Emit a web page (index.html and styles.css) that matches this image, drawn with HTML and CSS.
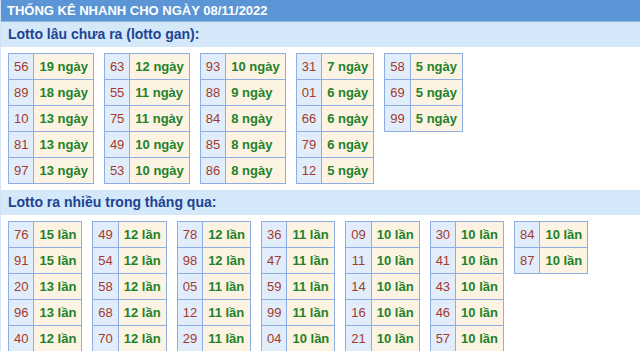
FILE: index.html
```html
<!DOCTYPE html>
<html>
<head>
<meta charset="utf-8">
<link rel="stylesheet" href="styles.css">
</head>
<body>
<div class="box">
  <div class="title">THỐNG KÊ NHANH CHO NGÀY 08/11/2022</div>
  <div class="band">Lotto lâu chưa ra (lotto gan):</div>
  <div class="grid">
    <table class="t"><tr><td class="n">56</td><td class="v">19 ngày</td></tr><tr><td class="n">89</td><td class="v">18 ngày</td></tr><tr><td class="n">10</td><td class="v">13 ngày</td></tr><tr><td class="n">81</td><td class="v">13 ngày</td></tr><tr><td class="n">97</td><td class="v">13 ngày</td></tr></table>
    <table class="t"><tr><td class="n">63</td><td class="v">12 ngày</td></tr><tr><td class="n">55</td><td class="v">11 ngày</td></tr><tr><td class="n">75</td><td class="v">11 ngày</td></tr><tr><td class="n">49</td><td class="v">10 ngày</td></tr><tr><td class="n">53</td><td class="v">10 ngày</td></tr></table>
    <table class="t"><tr><td class="n">93</td><td class="v">10 ngày</td></tr><tr><td class="n">88</td><td class="v">9 ngày</td></tr><tr><td class="n">84</td><td class="v">8 ngày</td></tr><tr><td class="n">85</td><td class="v">8 ngày</td></tr><tr><td class="n">86</td><td class="v">8 ngày</td></tr></table>
    <table class="t"><tr><td class="n">31</td><td class="v">7 ngày</td></tr><tr><td class="n">01</td><td class="v">6 ngày</td></tr><tr><td class="n">66</td><td class="v">6 ngày</td></tr><tr><td class="n">79</td><td class="v">6 ngày</td></tr><tr><td class="n">12</td><td class="v">5 ngày</td></tr></table>
    <table class="t"><tr><td class="n">58</td><td class="v">5 ngày</td></tr><tr><td class="n">69</td><td class="v">5 ngày</td></tr><tr><td class="n">99</td><td class="v">5 ngày</td></tr></table>
  </div>
  <div class="band">Lotto ra nhiều trong tháng qua:</div>
  <div class="grid">
    <table class="t"><tr><td class="n">76</td><td class="v">15 lần</td></tr><tr><td class="n">91</td><td class="v">15 lần</td></tr><tr><td class="n">20</td><td class="v">13 lần</td></tr><tr><td class="n">96</td><td class="v">13 lần</td></tr><tr><td class="n">40</td><td class="v">12 lần</td></tr></table>
    <table class="t"><tr><td class="n">49</td><td class="v">12 lần</td></tr><tr><td class="n">54</td><td class="v">12 lần</td></tr><tr><td class="n">58</td><td class="v">12 lần</td></tr><tr><td class="n">68</td><td class="v">12 lần</td></tr><tr><td class="n">70</td><td class="v">12 lần</td></tr></table>
    <table class="t"><tr><td class="n">78</td><td class="v">12 lần</td></tr><tr><td class="n">98</td><td class="v">12 lần</td></tr><tr><td class="n">05</td><td class="v">11 lần</td></tr><tr><td class="n">12</td><td class="v">11 lần</td></tr><tr><td class="n">29</td><td class="v">11 lần</td></tr></table>
    <table class="t"><tr><td class="n">36</td><td class="v">11 lần</td></tr><tr><td class="n">47</td><td class="v">11 lần</td></tr><tr><td class="n">59</td><td class="v">11 lần</td></tr><tr><td class="n">99</td><td class="v">11 lần</td></tr><tr><td class="n">04</td><td class="v">10 lần</td></tr></table>
    <table class="t"><tr><td class="n">09</td><td class="v">10 lần</td></tr><tr><td class="n">11</td><td class="v">10 lần</td></tr><tr><td class="n">14</td><td class="v">10 lần</td></tr><tr><td class="n">16</td><td class="v">10 lần</td></tr><tr><td class="n">21</td><td class="v">10 lần</td></tr></table>
    <table class="t"><tr><td class="n">30</td><td class="v">10 lần</td></tr><tr><td class="n">41</td><td class="v">10 lần</td></tr><tr><td class="n">43</td><td class="v">10 lần</td></tr><tr><td class="n">46</td><td class="v">10 lần</td></tr><tr><td class="n">57</td><td class="v">10 lần</td></tr></table>
    <table class="t"><tr><td class="n">84</td><td class="v">10 lần</td></tr><tr><td class="n">87</td><td class="v">10 lần</td></tr></table>
  </div>
</div>
</body>
</html>
```
FILE: styles.css
```css
html, body {
  margin: 0;
  padding: 0;
  background: #ffffff;
  font-family: "Liberation Sans", Arial, sans-serif;
}
.box {
  width: 640px;
  border-left: 1px solid #d3e3f5;
  box-sizing: border-box;
}
.title {
  height: 22px;
  line-height: 22px;
  background: #5b95d5;
  color: #ffffff;
  font-weight: bold;
  font-size: 13px;
  padding-left: 6px;
  border-bottom: 1px solid #8fb6e3;
  box-sizing: border-box;
}
.band {
  height: 25px;
  line-height: 25px;
  background: #d5e8fa;
  color: #1c4591;
  font-size: 14px;
  font-weight: bold;
  padding-left: 7px;
}
.grid {
  display: flex;
  align-items: flex-start;
  gap: 10px;
  padding: 6px 7px;
}
.t {
  border-collapse: collapse;
  font-size: 13px;
}
.t td {
  border: 1px solid #8eaee3;
  height: 25px;
  padding: 0 5px;
  white-space: nowrap;
}
.n {
  background: #e2edfb;
  color: #a33a2c;
  text-align: center;
}
.v {
  background: #fdf3e2;
  color: #22822a;
  font-weight: bold;
}
```
